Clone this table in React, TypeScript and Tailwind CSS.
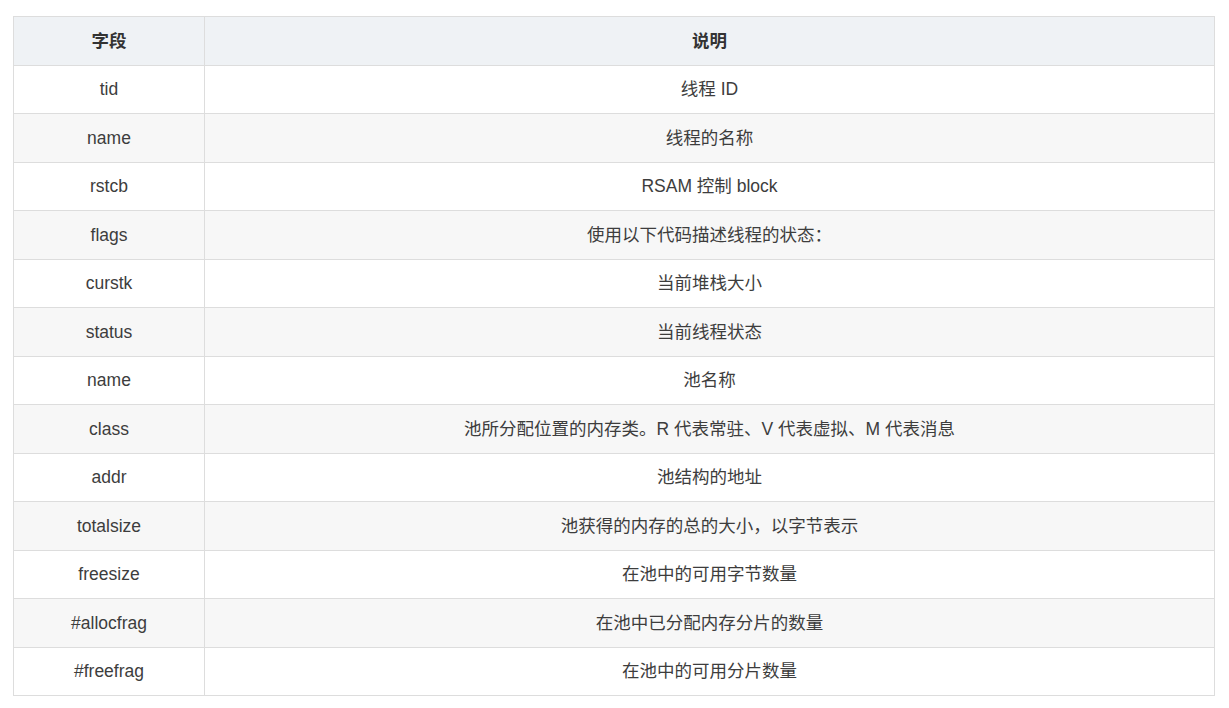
const ROWS: [string, string][] = [
  ['tid', '线程 ID'],
  ['name', '线程的名称'],
  ['rstcb', 'RSAM 控制 block'],
  ['flags', '使用以下代码描述线程的状态：'],
  ['curstk', '当前堆栈大小'],
  ['status', '当前线程状态'],
  ['name', '池名称'],
  ['class', '池所分配位置的内存类。R 代表常驻、V 代表虚拟、M 代表消息'],
  ['addr', '池结构的地址'],
  ['totalsize', '池获得的内存的总的大小，以字节表示'],
  ['freesize', '在池中的可用字节数量'],
  ['#allocfrag', '在池中已分配内存分片的数量'],
  ['#freefrag', '在池中的可用分片数量'],
];

export default function App() {
  return (
    <div
      className="min-h-screen bg-white pt-4 pl-[13px] pr-[14px] text-[#3d3d3d]"
      style={{ fontFamily: '"Liberation Sans", "Noto Sans CJK SC", sans-serif' }}
    >
      <table className="w-[1202px] border-collapse text-[17.5px] text-center">
        <thead>
          <tr className="h-[48.5px] bg-[#eff2f5] text-[#333]">
            <th className="w-[191px] border border-[#ddd] font-bold">字段</th>
            <th className="border border-[#ddd] font-bold">说明</th>
          </tr>
        </thead>
        <tbody>
          {ROWS.map(([field, desc], i) => (
            <tr key={i} className={`h-[48.5px] ${i % 2 === 1 ? 'bg-[#f7f7f7]' : 'bg-white'}`}>
              <td className="border border-[#ddd]">{field}</td>
              <td className="border border-[#ddd]">{desc}</td>
            </tr>
          ))}
        </tbody>
      </table>
    </div>
  );
}
